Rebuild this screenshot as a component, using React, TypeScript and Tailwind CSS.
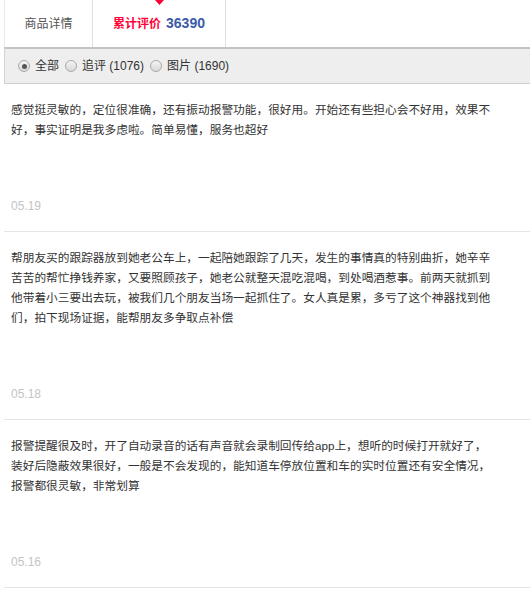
const reviews = [
  {
    id: 'r1',
    text: '感觉挺灵敏的，定位很准确，还有振动报警功能，很好用。开始还有些担心会不好用，效果不好，事实证明是我多虑啦。简单易懂，服务也超好',
    date: '05.19'
  },
  {
    id: 'r2',
    text: '帮朋友买的跟踪器放到她老公车上，一起陪她跟踪了几天，发生的事情真的特别曲折，她辛辛苦苦的帮忙挣钱养家，又要照顾孩子，她老公就整天混吃混喝，到处喝酒惹事。前两天就抓到他带着小三要出去玩，被我们几个朋友当场一起抓住了。女人真是累，多亏了这个神器找到他们，拍下现场证据，能帮朋友多争取点补偿',
    date: '05.18'
  },
  {
    id: 'r3',
    text: '报警提醒很及时，开了自动录音的话有声音就会录制回传给app上，想听的时候打开就好了，装好后隐蔽效果很好，一般是不会发现的，能知道车停放位置和车的实时位置还有安全情况，报警都很灵敏，非常划算',
    date: '05.16'
  }
];

const filters = [
  { id: 'all', label: '全部', checked: true },
  { id: 'append', label: '追评 (1076)', checked: false },
  { id: 'pics', label: '图片 (1690)', checked: false }
];

function Radio({ checked }: { checked: boolean }) {
  return (
    <span className="flex h-[12px] w-[12px] shrink-0 items-center justify-center rounded-full border border-[#a9a9a9] bg-gradient-to-b from-[#f4f4f4] to-[#d9d9d9]">
      {checked ? <span className="h-[5px] w-[5px] rounded-full bg-[#555]" /> : null}
    </span>
  );
}

export default function App() {
  return (
    <div className="min-h-[589px] bg-white font-['Liberation_Sans','Noto_Sans_CJK_SC',sans-serif]">
      <div className="ml-[4px]">
        <div className="flex h-[47px]">
          <div className="flex w-[89px] items-center justify-center border-l border-r border-l-[#e8e8e8] border-r-[#e6dfd8] text-[12px] text-[#555]">
            商品详情
          </div>
          <div className="relative flex w-[133px] items-center justify-center border-r border-[#e6dfd8] font-bold">
            <svg className="absolute left-[62px] top-0" width="9" height="5" viewBox="0 0 9 5">
              <polygon points="0,0 9,0 4.5,5" fill="#ff0036" />
            </svg>
            <span className="text-[12px] text-[#ff0036]">累计评价</span>
            <span className="ml-[5px] text-[14px] text-[#3d5aa8]">36390</span>
          </div>
        </div>

        <div className="flex h-[37px] items-center gap-[6px] border-b border-l border-t-2 border-b-[#cfcfcf] border-l-[#d4d4d4] border-t-[#c4c4c4] bg-[#eeeeee] pl-[13px] text-[12px] text-[#333]">
          {filters.map((filter) => (
            <label className="flex items-center gap-[5px]" key={filter.id}>
              <Radio checked={filter.checked} />
              <span>{filter.label}</span>
            </label>
          ))}
        </div>

        {reviews.map((review) => (
          <div className="border-b border-[#e5e5e5] pb-[15px] pl-[7px] pr-[36px] pt-[16px]" key={review.id}>
            <p className="text-[11.7px] leading-[20px] text-[#333]">{review.text}</p>
            <p className="mt-[56px] text-[12px] leading-[20px] text-[#c4c4c4]">{review.date}</p>
          </div>
        ))}
      </div>
    </div>
  );
}
